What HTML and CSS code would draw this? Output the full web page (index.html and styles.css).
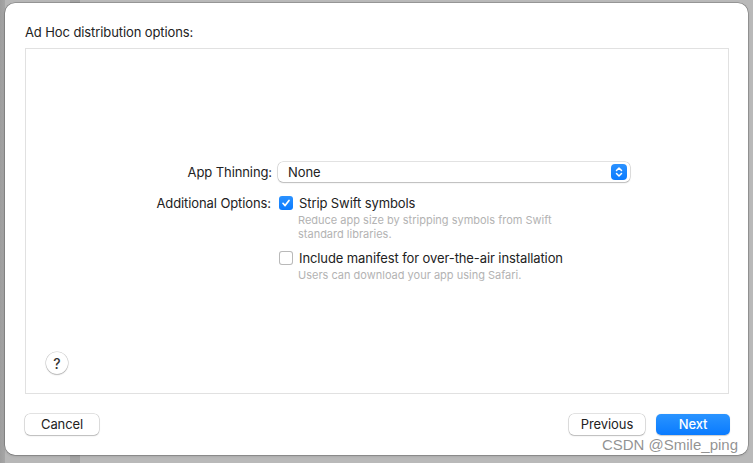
FILE: index.html
```html
<!DOCTYPE html>
<html>
<head>
<meta charset="utf-8">
<link rel="stylesheet" href="styles.css">
</head>
<body>
<div class="desk">
  <div class="dialog">
    <div class="title">Ad Hoc distribution options:</div>
    <div class="box">
      <div class="form">
        <div class="label">App Thinning:</div>
        <div class="popup">
          <span class="popup-text">None</span>
          <span class="stepper">
            <svg width="10" height="12" viewBox="0 0 10 12"><path d="M2.5 4.5 L5 2 L7.5 4.5 M2.5 7.5 L5 10 L7.5 7.5" fill="none" stroke="#fff" stroke-width="1.5" stroke-linecap="round" stroke-linejoin="round"/></svg>
          </span>
        </div>
        <div class="label label-opt">Additional Options:</div>
        <div class="options">
          <div class="option">
            <span class="check checked">
              <svg width="10" height="10" viewBox="0 0 10 10"><path d="M2 5.3 L4.1 7.6 L8 2.4" fill="none" stroke="#fff" stroke-width="1.7" stroke-linecap="round" stroke-linejoin="round"/></svg>
            </span>
            <div class="opt-body">
              <div class="opt-title">Strip Swift symbols</div>
              <div class="opt-desc">Reduce app size by stripping symbols from Swift<br>standard libraries.</div>
            </div>
          </div>
          <div class="option option2">
            <span class="check"></span>
            <div class="opt-body">
              <div class="opt-title">Include manifest for over-the-air installation</div>
              <div class="opt-desc">Users can download your app using Safari.</div>
            </div>
          </div>
        </div>
      </div>
      <div class="help">?</div>
    </div>
    <div class="buttons">
      <div class="btn">Cancel</div>
      <div class="spacer"></div>
      <div class="btn btn-prev">Previous</div>
      <div class="btn btn-next">Next</div>
    </div>
    <div class="watermark">CSDN @Smile_ping</div>
  </div>
</div>
</body>
</html>
```
FILE: styles.css
```css
* { box-sizing: border-box; }
html, body { margin: 0; padding: 0; }
body {
  width: 753px;
  height: 463px;
  overflow: hidden;
  font-family: Inter, "Liberation Sans", sans-serif;
  color: #222;
  letter-spacing: -0.1px;
}
.desk {
  width: 753px;
  height: 463px;
  padding: 3px 5px 8px 5px;
  background:
    linear-gradient(to right, #9d9d9d 0, #a6a6a6 5px, #b7b7b7 5px, #b7b7b7 70px, #a4a4a4 70px, #a4a4a4 80px, #b9b9b9 80px);
}
.dialog {
  position: relative;
  width: 743px;
  height: 452px;
  background: #fff;
  border-radius: 10px;
  box-shadow: 0 0 0 0.5px rgba(0,0,0,0.35), 0 1px 3px rgba(0,0,0,0.15);
  padding: 21px 18px 0 20px;
  display: flex;
  flex-direction: column;
}
.title {
  font-size: 13px;
  line-height: 16px;
  height: 16px;
  margin-bottom: 8px;
}
.box {
  height: 346px;
  margin-right: 1px;
  border: 1px solid #e1e1e1;
  display: flex;
  flex-direction: column;
  padding-top: 113px;
}
.form {
  display: grid;
  grid-template-columns: 246px 352px;
  column-gap: 6px;
  row-gap: 12px;
  font-size: 13px;
}
.label {
  text-align: right;
  line-height: 20px;
}
.label-opt {
  line-height: 16px;
  margin-top: 1px;
  margin-right: 1px;
}
.popup {
  height: 20px;
  border-radius: 5px;
  background: #fff;
  box-shadow: 0 0 0 0.5px rgba(0,0,0,0.22), 0 1px 1.5px rgba(0,0,0,0.18);
  display: flex;
  align-items: center;
  justify-content: space-between;
  padding: 0 3px 0 10px;
}
.popup-text { line-height: 20px; }
.stepper {
  width: 16px;
  height: 16px;
  border-radius: 4px;
  background: linear-gradient(#2b92ff, #0b7bff);
  display: flex;
  align-items: center;
  justify-content: center;
}
.options { display: flex; flex-direction: column; }
.option {
  display: flex;
  align-items: flex-start;
  padding-left: 1px;
}
.option2 { margin-top: 8px; }
.check {
  flex: none;
  width: 14px;
  height: 14px;
  border-radius: 3px;
  margin-top: 2px;
  background: #fff;
  box-shadow: inset 0 0 0 1px #b9b9b9;
  display: flex;
  align-items: center;
  justify-content: center;
}
.check.checked {
  background: linear-gradient(#2b92ff, #0b7bff);
  box-shadow: none;
}
.opt-body { margin-left: 6px; }
.opt-title {
  font-size: 13px;
  line-height: 18px;
}
.opt-desc {
  font-size: 11px;
  line-height: 14px;
  margin-top: 1px;
  color: #b3b3b3;
  margin-left: -1px;
  letter-spacing: 0;
}
.help {
  margin-top: auto;
  margin-left: 20px;
  margin-bottom: 19px;
  width: 22px;
  height: 22px;
  border-radius: 50%;
  background: #fff;
  box-shadow: 0 0 0 0.5px rgba(0,0,0,0.2), 0 1px 1.5px rgba(0,0,0,0.2);
  display: flex;
  align-items: center;
  justify-content: center;
  font-size: 14px;
  font-weight: 500;
  color: #333;
}
.buttons {
  display: flex;
  margin-top: 20px;
  gap: 11px;
}
.spacer { flex: 1; }
.btn {
  width: 74px;
  height: 21px;
  border-radius: 5px;
  background: #fff;
  box-shadow: 0 0 0 0.5px rgba(0,0,0,0.22), 0 1px 1.5px rgba(0,0,0,0.18);
  font-size: 13px;
  line-height: 21px;
  text-align: center;
}
.btn-prev { width: 76px; }
.btn-next {
  background: linear-gradient(#2a94ff, #0a7bff);
  color: #fff;
  font-weight: 500;
  box-shadow: 0 0.5px 1px rgba(0,0,0,0.2);
}
.watermark {
  position: absolute;
  right: 10px;
  bottom: 2px;
  font-family: "Liberation Sans", Arial, sans-serif;
  font-size: 15px;
  line-height: 16px;
  letter-spacing: 0;
  color: rgba(110,110,110,0.75);
}
```
